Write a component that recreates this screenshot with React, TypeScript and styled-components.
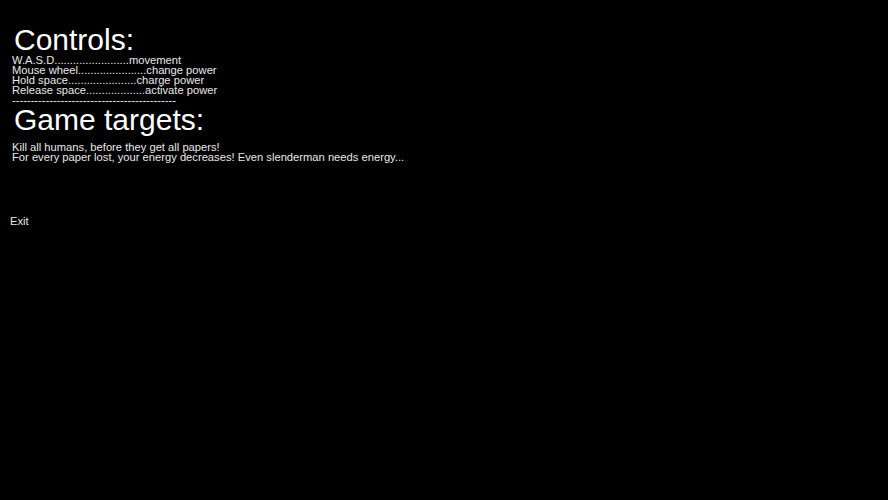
import React from 'react'
import { styled, createGlobalStyle } from 'styled-components'

const GlobalStyle = createGlobalStyle`
  html, body {
    margin: 0;
    padding: 0;
    background: #000;
  }
  body {
    font-family: 'Liberation Sans', Arial, sans-serif;
    color: #fff;
  }
`

const controls = [
  { key: 'W.A.S.D', dots: 24, action: 'movement' },
  { key: 'Mouse wheel', dots: 22, action: 'change power' },
  { key: 'Hold space', dots: 22, action: 'charge power' },
  { key: 'Release space', dots: 19, action: 'activate power' },
]

const App: React.FC = () => {
  return (
    <Page>
      <GlobalStyle />
      <Heading>Controls:</Heading>
      <List>
        {controls.map((c) => (
          <Line key={c.key}>
            {c.key}
            {'.'.repeat(c.dots)}
            {c.action}
          </Line>
        ))}
        <Line>{'-'.repeat(44)}</Line>
      </List>
      <Heading>Game targets:</Heading>
      <Targets>
        <Line>Kill all humans, before they get all papers!</Line>
        <Line>For every paper lost, your energy decreases! Even slenderman needs energy...</Line>
      </Targets>
      <ExitButton>Exit</ExitButton>
    </Page>
  )
}

const Page = styled.div`
  width: 888px;
  height: 500px;
  background: #000;
  padding: 24px 0 0 12px;
  box-sizing: border-box;
  display: flex;
  flex-direction: column;
  align-items: flex-start;
`

const Heading = styled.div`
  font-size: 30px;
  line-height: 32px;
  margin-left: 2px;
  color: #fff;
`

const List = styled.div`
  display: flex;
  flex-direction: column;
  margin-top: -1px;
  margin-bottom: -1px;
`

const Line = styled.div`
  font-size: 11.2px;
  line-height: 10px;
  color: #e8e8e8;
  white-space: pre;
`

const Targets = styled.div`
  display: flex;
  flex-direction: column;
  margin-top: 6px;
`

const ExitButton = styled.div`
  font-size: 11.2px;
  line-height: 14px;
  color: #e8e8e8;
  margin-top: 52px;
  margin-left: -2px;
  cursor: pointer;
`

export default App
